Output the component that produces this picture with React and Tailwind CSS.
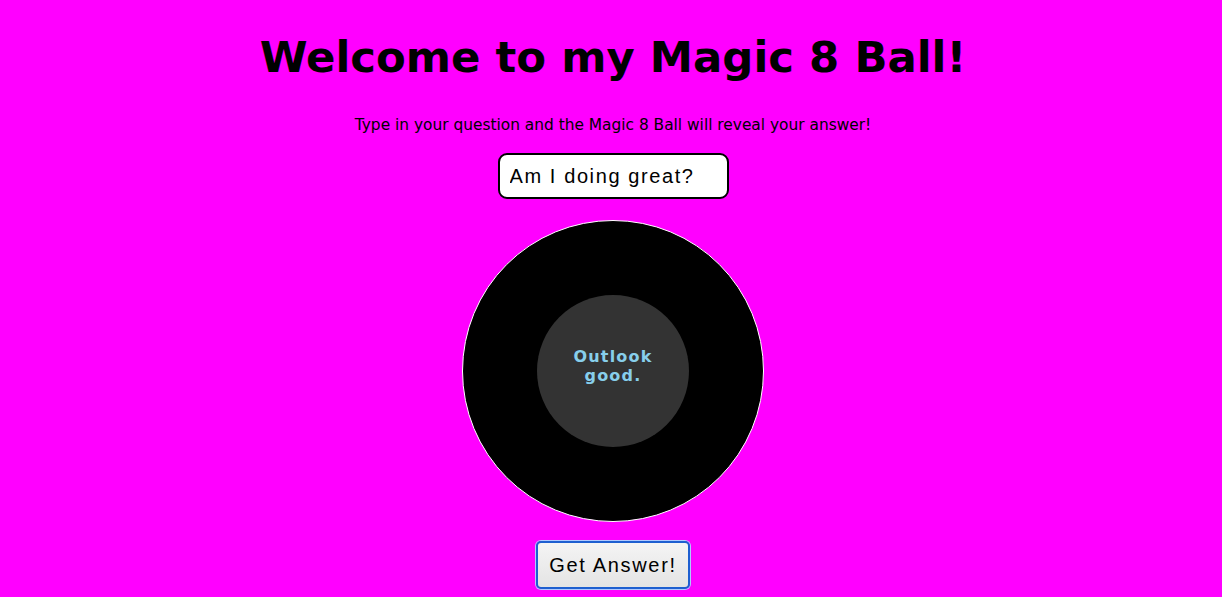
import React, { useState } from "react";

const answers = ["Outlook good."];

const App = () => {
  const [question, setQuestion] = useState("Am I doing great?");
  const [answer, setAnswer] = useState(answers[0]);

  return (
    <div className="min-h-screen bg-[#ff00ff] flex flex-col items-center pl-1 font-['DejaVu_Sans',sans-serif] text-black">
      {/* TITLE */}
      <h1 className="mt-[29px] text-[43.4px] leading-[56px] font-bold">
        Welcome to my Magic 8 Ball!
      </h1>

      <p className="mt-[31px] text-[15.4px] leading-[18px]">
        Type in your question and the Magic 8 Ball will reveal your answer!
      </p>

      {/* QUESTION */}
      <input
        value={question}
        onChange={(e) => setQuestion(e.target.value)}
        className="mt-[19px] w-[231px] h-[46px] border-2 border-black rounded-[9px] bg-white px-[10px] text-[20px] tracking-[1.6px] font-['Liberation_Sans',sans-serif] outline-none"
      />

      {/* BALL */}
      <div className="mt-[21px] w-[302px] h-[302px] rounded-full bg-black border border-white flex items-center justify-center">
        <div className="w-[152px] h-[152px] rounded-full bg-[#333333] flex items-center justify-center">
          <p className="-mt-[10px] text-center text-[16px] leading-[19px] font-bold tracking-[1.2px] text-[#87ceeb] w-[100px]">
            {answer}
          </p>
        </div>
      </div>

      {/* BUTTON */}
      <button
        onClick={() => setAnswer(answers[Math.floor(Math.random() * answers.length)])}
        className="mt-[19px] w-[154px] h-[48px] rounded-[5px] border-2 border-[#1e5fd0] bg-gradient-to-b from-[#f4f4f4] to-[#e4e4e4] text-[20px] tracking-[1.7px] font-['Liberation_Sans',sans-serif] shadow-[0_0_0_1px_#b0c8ff]"
      >
        Get Answer!
      </button>
    </div>
  );
};

export default App;
